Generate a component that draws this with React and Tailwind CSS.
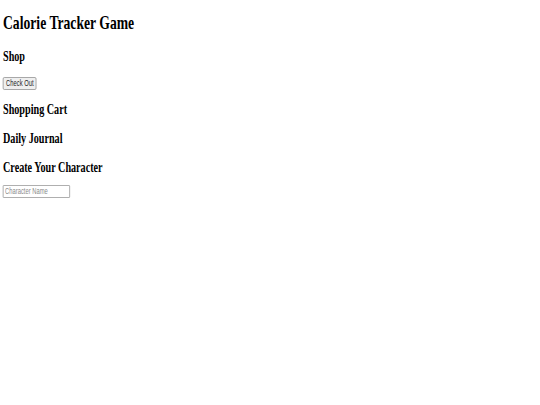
export default function App() {
  return (
    <div className="min-h-[405px] w-[540px] bg-white overflow-hidden">
      <div className="origin-top-left scale-x-[0.7] w-[771px] pl-[4.3px] flex flex-col items-start text-black" style={{ fontFamily: '"Liberation Serif", "Times New Roman", serif' }}>
        <h1 className="mt-[13px] text-[19.5px] leading-[19.5px] font-bold">Calorie Tracker Game</h1>
        <h2 className="mt-[16px] text-[14.5px] leading-[14.5px] font-bold">Shop</h2>
        <button className="mt-[13.5px] h-[13px] w-[48px] flex items-center justify-center bg-[#efefef] border border-[#9a9a9a] rounded-[2px] text-[8.3px] leading-none text-[#222] font-['Liberation_Sans',Arial,sans-serif]">
          Check Out
        </button>
        <h2 className="mt-[12.5px] text-[14.5px] leading-[14.5px] font-bold">Shopping Cart</h2>
        <h2 className="mt-[14.5px] text-[14.5px] leading-[14.5px] font-bold">Daily Journal</h2>
        <h2 className="mt-[14px] text-[14.5px] leading-[14.5px] font-bold">Create Your Character</h2>
        <input
          type="text"
          placeholder="Character Name"
          className="mt-[10.5px] h-[13px] w-[96px] px-[2px] bg-white border border-[#a0a0a0] rounded-[1px] text-[8.3px] leading-none text-black placeholder:text-[#8a8a8a] font-['Liberation_Sans',Arial,sans-serif] outline-none"
        />
      </div>
    </div>
  );
}
